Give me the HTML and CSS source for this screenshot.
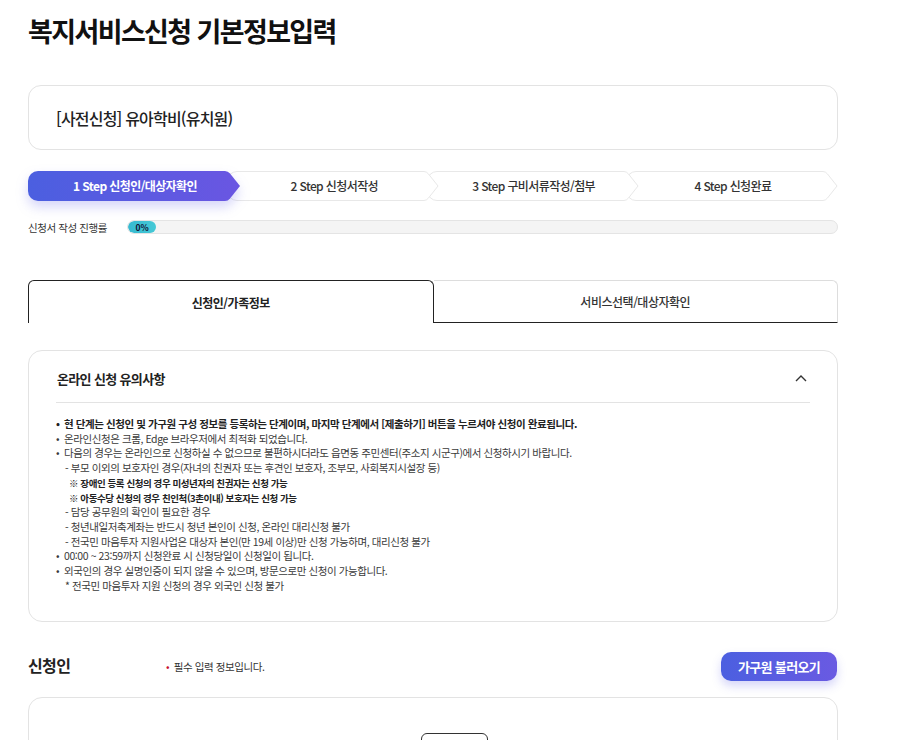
FILE: index.html
```html
<!DOCTYPE html>
<html lang="ko">
<head>
<meta charset="utf-8">
<link rel="stylesheet" href="styles.css">
</head>
<body>
<div class="page">
  <h1 class="title">복지서비스신청 기본정보입력</h1>

  <div class="svc-card">[사전신청] 유아학비(유치원)</div>

  <ol class="steps">
    <li class="step active">
      <svg class="step-bg" width="212" height="30" viewBox="0 0 212 30">
        <defs>
          <linearGradient id="sg" x1="0" x2="1" y1="0" y2="0">
            <stop offset="0" stop-color="#4b5fe0"/>
            <stop offset="1" stop-color="#6a56e2"/>
          </linearGradient>
        </defs>
        <path d="M10,0 H197 Q200,0 202,2.5 L212,15 L202,27.5 Q200,30 197,30 H10 A10,10 0 0 1 0,20 V10 A10,10 0 0 1 10,0 Z" fill="url(#sg)"/>
      </svg>
      <span>1 Step 신청인/대상자확인</span>
    </li>
    <li class="step">
      <svg class="step-bg" width="212" height="30" viewBox="0 0 212 30"><path d="M10,0.5 H197 Q199.5,0.5 201.5,3 L211,15 L201.5,27 Q199.5,29.5 197,29.5 H10 A9.5,9.5 0 0 1 0.5,20 V10 A9.5,9.5 0 0 1 10,0.5 Z" fill="#fff" stroke="#e8e8e8"/></svg>
      <span>2 Step 신청서작성</span>
    </li>
    <li class="step">
      <svg class="step-bg" width="212" height="30" viewBox="0 0 212 30"><path d="M10,0.5 H197 Q199.5,0.5 201.5,3 L211,15 L201.5,27 Q199.5,29.5 197,29.5 H10 A9.5,9.5 0 0 1 0.5,20 V10 A9.5,9.5 0 0 1 10,0.5 Z" fill="#fff" stroke="#e8e8e8"/></svg>
      <span>3 Step 구비서류작성/첨부</span>
    </li>
    <li class="step">
      <svg class="step-bg" width="212" height="30" viewBox="0 0 212 30"><path d="M10,0.5 H197 Q199.5,0.5 201.5,3 L211,15 L201.5,27 Q199.5,29.5 197,29.5 H10 A9.5,9.5 0 0 1 0.5,20 V10 A9.5,9.5 0 0 1 10,0.5 Z" fill="#fff" stroke="#e8e8e8"/></svg>
      <span>4 Step 신청완료</span>
    </li>
  </ol>

  <div class="progress">
    <span class="progress-label">신청서 작성 진행률</span>
    <div class="progress-track">
      <div class="progress-fill">0%</div>
    </div>
  </div>

  <div class="tabs">
    <div class="tab on">신청인/가족정보</div>
    <div class="tab">서비스선택/대상자확인</div>
  </div>

  <section class="notice">
    <div class="notice-head">
      <h2>온라인 신청 유의사항</h2>
      <svg class="chev" width="12" height="8" viewBox="0 0 12 8"><path d="M1,7 L6,2 L11,7" fill="none" stroke="#333" stroke-width="1.4"/></svg>
    </div>
    <ul class="notice-list">
      <li class="b strong">현 단계는 신청인 및 가구원 구성 정보를 등록하는 단계이며, 마지막 단계에서 [제출하기] 버튼을 누르셔야 신청이 완료됩니다.</li>
      <li class="b">온라인신청은 크롬, Edge 브라우저에서 최적화 되었습니다.</li>
      <li class="b">다음의 경우는 온라인으로 신청하실 수 없으므로 불편하시더라도 읍면동 주민센터(주소지 시군구)에서 신청하시기 바랍니다.</li>
      <li class="d">- 부모 이외의 보호자인 경우(자녀의 친권자 또는 후견인 보호자, 조부모, 사회복지시설장 등)</li>
      <li class="r">※ 장애인 등록 신청의 경우 미성년자의 친권자는 신청 가능</li>
      <li class="r">※ 아동수당 신청의 경우 친인척(3촌이내) 보호자는 신청 가능</li>
      <li class="d">- 담당 공무원의 확인이 필요한 경우</li>
      <li class="d">- 청년내일저축계좌는 반드시 청년 본인이 신청, 온라인 대리신청 불가</li>
      <li class="d">- 전국민 마음투자 지원사업은 대상자 본인(만 19세 이상)만 신청 가능하며, 대리신청 불가</li>
      <li class="b">00:00 ~ 23:59까지 신청완료 시 신청당일이 신청일이 됩니다.</li>
      <li class="b">외국인의 경우 실명인증이 되지 않을 수 있으며, 방문으로만 신청이 가능합니다.</li>
      <li class="d">* 전국민 마음투자 지원 신청의 경우 외국인 신청 불가</li>
    </ul>
  </section>

  <div class="sec-head">
    <h3>신청인</h3>
    <p class="req"><span class="dot">•</span> 필수 입력 정보입니다.</p>
    <button class="btn-family">가구원 불러오기</button>
  </div>

  <div class="form-card">
    <div class="mini-btn"></div>
  </div>
</div>
</body>
</html>
```
FILE: styles.css
```css
* { box-sizing: border-box; }
html, body { margin: 0; padding: 0; background: #fff; }
body {
  font-family: "Noto Sans CJK KR", "Noto Sans", sans-serif;
  color: #222;
  overflow: hidden;
}
.page {
  width: 810px;
  margin-left: 28px;
}
.title {
  margin: 0;
  padding-top: 12px;
  font-size: 27px;
  line-height: 38px;
  font-weight: 700;
  letter-spacing: -0.06em;
  color: #111;
}
.svc-card {
  margin-top: 35px;
  height: 65px;
  border: 1px solid #e3e3e3;
  border-radius: 13px;
  padding-left: 27px;
  display: flex;
  align-items: center;
  font-size: 16px;
  font-weight: 500;
  letter-spacing: -0.05em;
  color: #222;
}
.steps {
  list-style: none;
  margin: 21px 0 0;
  padding: 0;
  display: flex;
}
.step {
  position: relative;
  flex: 0 0 212px;
  height: 30px;
  display: flex;
  align-items: center;
  justify-content: center;
  font-size: 12px;
  font-weight: 500;
  color: #333;
  letter-spacing: -0.05em;
}
.step + .step { margin-left: -12.7px; }
.step:nth-child(1) { z-index: 4; }
.step:nth-child(2) { z-index: 3; }
.step:nth-child(3) { z-index: 2; }
.step:nth-child(4) { z-index: 1; }
.step-bg {
  position: absolute;
  left: 0;
  top: 0;
}
.step span { position: relative; padding-left: 2px; margin-top: -2px; }
.step.active { color: #fff; font-weight: 700; }
.step.active .step-bg { filter: drop-shadow(0 6px 6px rgba(90, 90, 230, 0.25)); }

.progress {
  margin-top: 19px;
  display: flex;
  align-items: center;
  height: 14px;
}
.progress-label {
  width: 99px;
  font-size: 10.5px;
  color: #333;
  letter-spacing: -0.04em;
}
.progress-track {
  flex: 1;
  height: 14px;
  border: 1px solid #e4e4e4;
  background: #f4f4f4;
  border-radius: 7px;
  overflow: hidden;
}
.progress-fill {
  width: 28px;
  height: 12px;
  border-radius: 6px;
  background: linear-gradient(90deg, #36b9d0, #45c9d6);
  font-size: 8.5px;
  font-weight: 700;
  color: #113;
  display: flex;
  align-items: center;
  justify-content: center;
  line-height: 1;
}

.tabs {
  margin-top: 46px;
  display: flex;
  height: 43px;
}
.tab {
  flex: 1;
  display: flex;
  align-items: center;
  justify-content: center;
  font-size: 12px;
  font-weight: 500;
  color: #333;
  letter-spacing: -0.04em;
  border-top: 1px solid #ddd;
  border-right: 1px solid #ddd;
  border-bottom: 1px solid #222;
  border-radius: 0 6px 0 0;
}
.tab.on {
  font-weight: 700;
  color: #222;
  border: 1px solid #222;
  border-bottom: none;
  border-radius: 6px 6px 0 0;
}

.notice {
  margin-top: 27px;
  border: 1px solid #e3e3e3;
  border-radius: 14px;
  padding: 0 27px 0 27px;
  height: 272px;
}
.notice-head {
  height: 52px;
  display: flex;
  align-items: center;
  justify-content: space-between;
  border-bottom: 1px solid #e3e3e3;
  padding-top: 3px;
}
.notice-head h2 {
  margin: 0;
  font-size: 13px;
  font-weight: 700;
  letter-spacing: -0.05em;
  color: #222;
  padding-left: 1px;
}
.chev { margin-right: 3px; }
.notice-list {
  list-style: none;
  margin: 0;
  padding: 14px 0 0 0;
  font-size: 10.5px;
  line-height: 14.7px;
  color: #3a3a3a;
  letter-spacing: -0.04em;
}
.notice-list li { white-space: nowrap; }
.notice-list .b { padding-left: 8px; position: relative; }
.notice-list .b::before {
  content: "•";
  position: absolute;
  left: 0;
  top: 0;
}
.notice-list .strong { font-weight: 700; color: #222; }
.notice-list .d { padding-left: 9px; }
.notice-list .r { padding-left: 13px; font-weight: 700; font-size: 9.5px; color: #222; }

.sec-head {
  margin-top: 29px;
  display: flex;
  align-items: center;
  height: 30px;
}
.sec-head h3 {
  margin: 0;
  width: 138px;
  font-size: 16px;
  font-weight: 700;
  color: #222;
  letter-spacing: -0.04em;
  margin-top: -2px;
}
.req {
  margin: 0;
  flex: 1;
  font-size: 10.5px;
  color: #333;
  letter-spacing: -0.04em;
}
.req .dot { color: #c8102e; margin-right: 2px; }
.btn-family {
  width: 116px;
  height: 29px;
  margin-right: 1px;
  border: none;
  border-radius: 10px;
  background: linear-gradient(90deg, #4b5fe0, #6a5ae2);
  color: #fff;
  font-family: inherit;
  font-size: 13px;
  font-weight: 700;
  letter-spacing: -0.05em;
  box-shadow: 0 5px 10px rgba(90, 90, 230, 0.25);
}

.form-card {
  margin-top: 16px;
  height: 120px;
  border: 1px solid #e3e3e3;
  border-radius: 14px;
  padding: 35px 0 0 392px;
}
.mini-btn {
  width: 67px;
  height: 30px;
  border: 1px solid #333;
  border-radius: 6px;
}
```
